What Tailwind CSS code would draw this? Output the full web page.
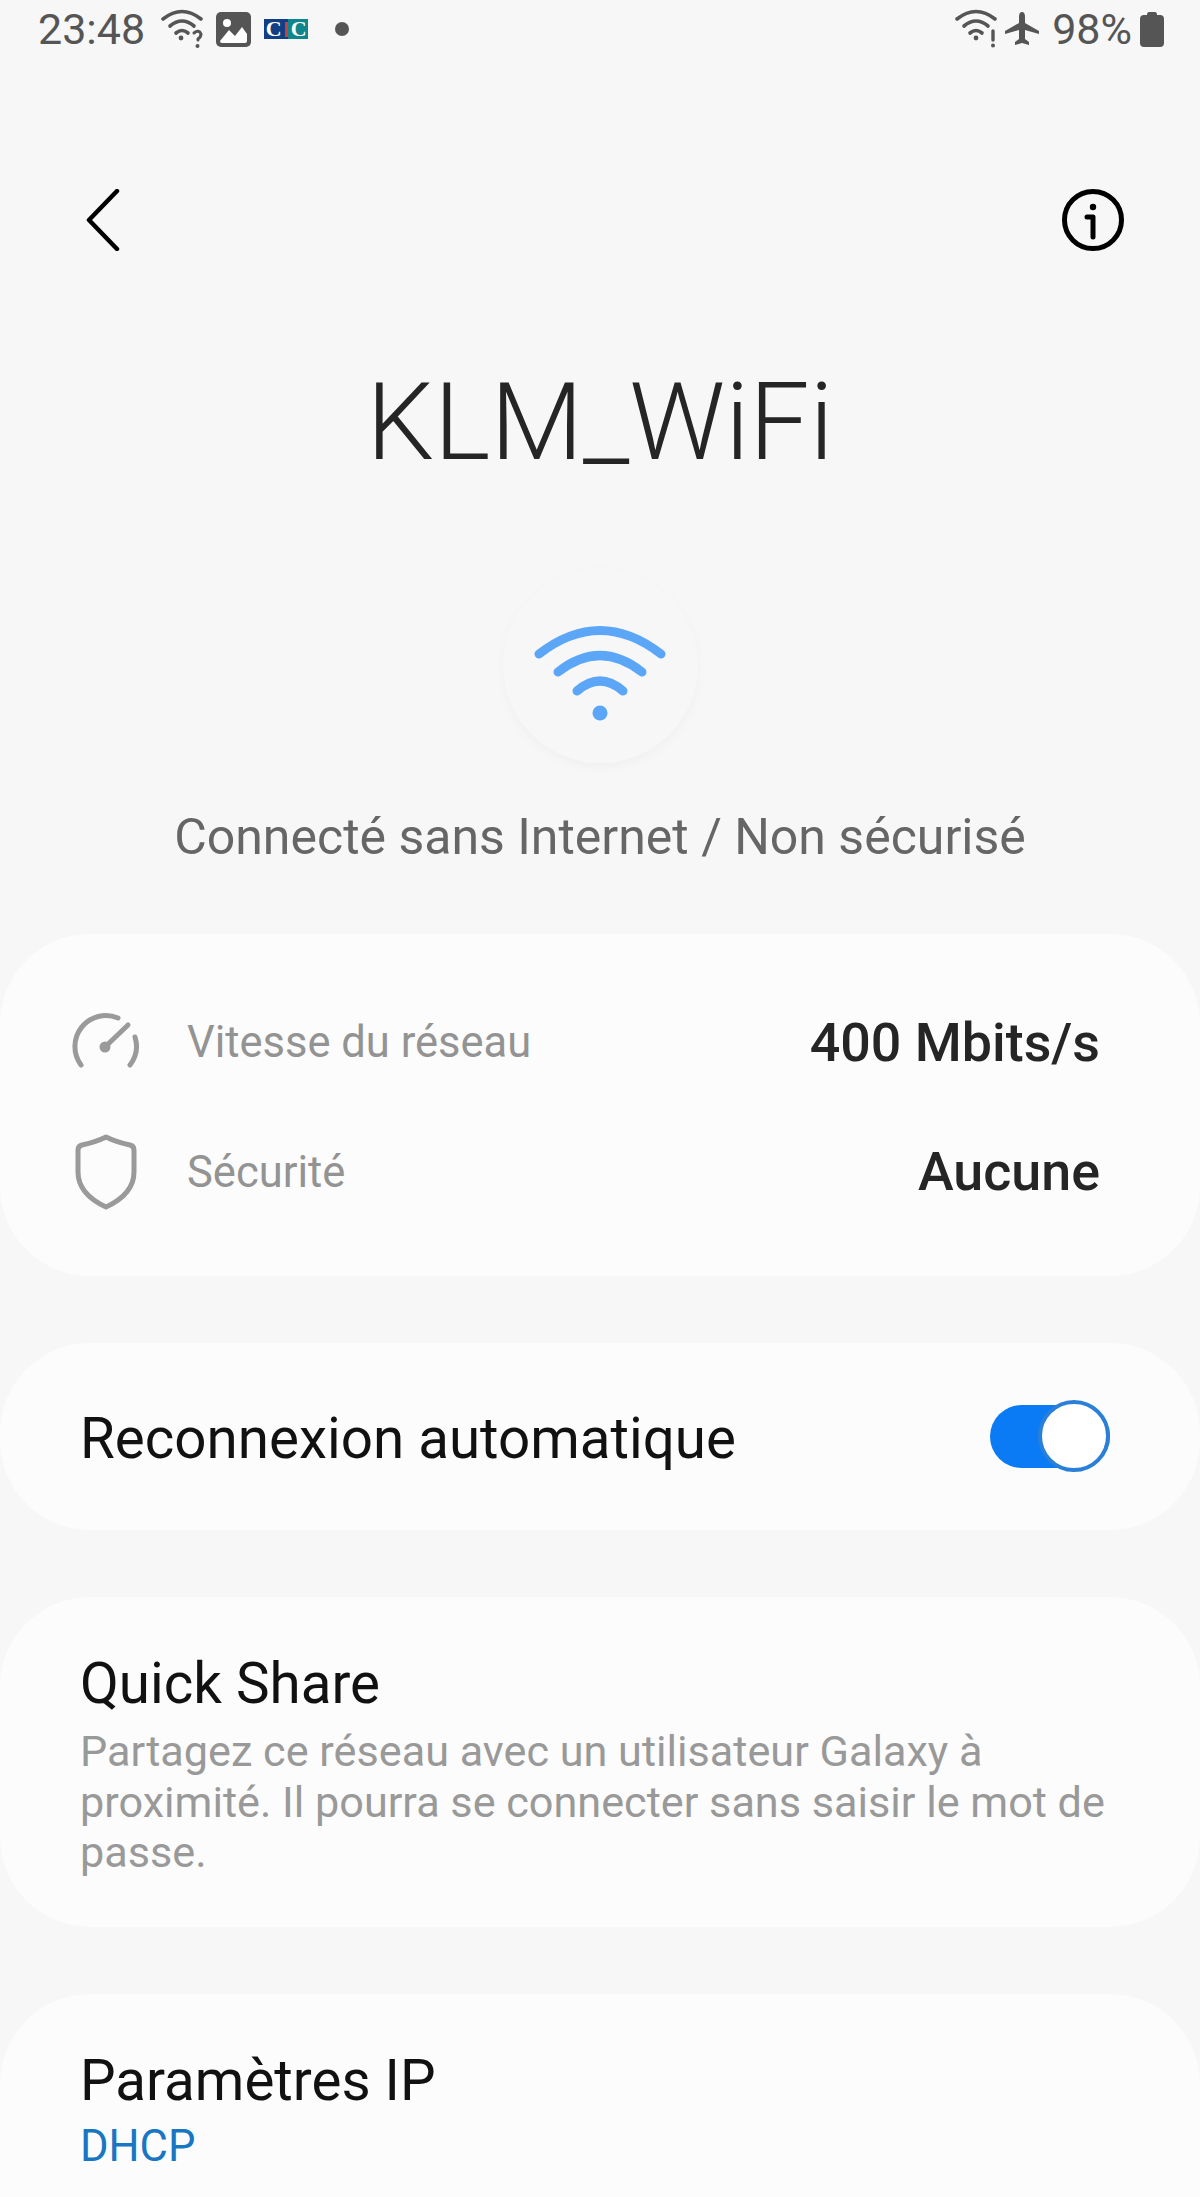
<!DOCTYPE html>
<html lang="fr">
<head>
    <meta charset="UTF-8">
    <title>KLM_WiFi</title>
    <script src="https://cdn.jsdelivr.net/npm/@tailwindcss/browser@4"></script>
</head>
<body class="bg-[#f7f7f7] font-['Roboto',sans-serif]">
<div class="w-[1200px] h-[2197px] overflow-hidden">

    <!-- Status bar -->
    <div class="h-[58px] flex items-center justify-between pl-[38px] pr-[36px] text-[#555] text-[43px] leading-none">
        <div class="flex items-center">
            <span>23:48</span>
            <svg class="ml-[16px]" width="44" height="40" viewBox="0 0 44 40" fill="none" stroke="#555" stroke-width="3.600" stroke-linecap="round">
                <path d="M2 10Q21 -5 40 10"/><path d="M9 17Q21 7 33 17"/><path d="M15 24Q21 19 27 24"/>
                <circle cx="20" cy="29" r="2.400" fill="#555" stroke="none"/>
                <path d="M33 24Q38 20 40 25Q40 28 37 30V31" stroke-width="3"/><circle cx="36.500" cy="37" r="2" fill="#555" stroke="none"/>
            </svg>
            <svg class="ml-[11px]" width="35" height="35" viewBox="0 0 35 35">
                <rect width="35" height="35" rx="5" fill="#555"/>
                <path d="M4 29L13 18L19 24L26 15L31 22V29Q31 31 29 31H6Q4 31 4 29Z" fill="#fff"/>
                <circle cx="11" cy="11" r="4" fill="#fff"/>
            </svg>
            <div class="ml-[13px] w-[44px] h-[20px] flex items-center justify-around bg-[linear-gradient(90deg,#123f84_55%,#11858c_55%)] text-white text-[22px] leading-none font-['Liberation_Serif',serif] font-bold">
                <span>C</span><span class="w-[3px] h-[15px] bg-[#c9413f]"></span><span>C</span>
            </div>
            <span class="ml-[27px] w-[14px] h-[14px] rounded-full bg-[#555]"></span>
        </div>
        <div class="flex items-center">
            <svg width="44" height="40" viewBox="0 0 44 40" fill="none" stroke="#555" stroke-width="3.600" stroke-linecap="round">
                <path d="M2 10Q21 -5 40 10"/><path d="M9 17Q21 7 33 17"/><path d="M15 24Q21 19 27 24"/>
                <circle cx="21" cy="29" r="2.400" fill="#555" stroke="none"/>
                <path d="M38 22V31" stroke-width="3.400"/><circle cx="38" cy="36.500" r="2" fill="#555" stroke="none"/>
            </svg>
            <svg class="ml-[6px]" width="34" height="34" viewBox="0 0 34 34">
                <path d="M17 0Q20 0 20 5V11L34 19V22L20 18V27L24 30V33L17 31L10 33V30L14 27V18L0 22V19L14 11V5Q14 0 17 0Z" fill="#555"/>
            </svg>
            <span class="ml-[13px]">98%</span>
            <svg class="ml-[8px]" width="24" height="35" viewBox="0 0 24 35">
                <path d="M7 3Q7 0 9 0H15Q17 0 17 3H20Q24 3 24 7V31Q24 35 20 35H4Q0 35 0 31V7Q0 3 4 3Z" fill="#555"/>
            </svg>
        </div>
    </div>

    <!-- Header icons -->
    <div class="mt-[132px] h-[60px] flex items-center justify-between pl-[86px] pr-[76px]">
        <svg width="34" height="62" viewBox="0 0 34 62" fill="none" stroke="#000" stroke-width="4.500" stroke-linecap="round" stroke-linejoin="round">
            <path d="M31 2L3 31L31 60"/>
        </svg>
        <svg width="62" height="62" viewBox="0 0 62 62" fill="none" stroke="#000" stroke-width="5" stroke-linecap="round" stroke-linejoin="round">
            <circle cx="31" cy="31" r="28.500"/>
            <path d="M25 28H31V48"/>
            <circle cx="31" cy="18" r="3.200" fill="#000" stroke="none"/>
        </svg>
    </div>

    <!-- Title -->
    <h1 class="mt-[123px] text-center text-[107px] leading-[100px] font-light text-[#252525]">KLM_WiFi</h1>

    <!-- Wifi badge -->
    <div class="mt-[95px] mx-auto w-[195px] h-[195px] pt-[14px] rounded-full bg-[#f7f7f7] shadow-[0_4px_12px_rgba(0,0,0,0.03)] flex items-center justify-center">
        <svg width="132" height="100" viewBox="0 0 132 100" fill="none" stroke="#5ca6f8" stroke-width="9" stroke-linecap="round">
            <path d="M5 31Q66 -16 127 31"/>
            <path d="M24 49Q66 16 108 49"/>
            <path d="M43 68Q66 48 89 68"/>
            <circle cx="66" cy="90" r="7.500" fill="#5ca6f8" stroke="none"/>
        </svg>
    </div>

    <p class="mt-[44px] text-center text-[50px] leading-[60px] text-[#666]">Connecté sans Internet / Non sécurisé</p>

    <!-- Network info card -->
    <section class="mt-[67px] h-[342px] bg-[#fcfcfc] rounded-[90px] pl-[70px] pr-[100px] pt-[65px]">
        <div class="flex items-center h-[88px]">
            <svg width="72" height="66" viewBox="0 0 72 66" fill="none" stroke="#9a9a9a" stroke-width="5" stroke-linecap="round">
                <path d="M11 55A31 31 0 0 1 48 8"/>
                <path d="M60 55A31 31 0 0 0 65 27"/>
                <path d="M35 37L58 15"/>
                <circle cx="35" cy="37" r="5.500" fill="#9a9a9a" stroke="none"/>
            </svg>
            <span class="ml-[45px] text-[43.500px] text-[#939393]">Vitesse du réseau</span>
            <span class="ml-auto text-[53.800px] font-medium text-[#252525]">400 Mbits/s</span>
        </div>
        <div class="flex items-center h-[88px] mt-[41px]">
            <svg width="72" height="76" viewBox="0 0 72 76" fill="none" stroke="#9a9a9a" stroke-width="5" stroke-linejoin="round">
                <path d="M36 3Q46 8 60 11Q64 12 64 16V38Q64 60 36 73Q8 60 8 38V16Q8 12 12 11Q26 8 36 3Z"/>
            </svg>
            <span class="ml-[45px] text-[43.500px] text-[#939393] translate-y-[1px]">Sécurité</span>
            <span class="ml-auto text-[53.800px] font-medium text-[#252525]">Aucune</span>
        </div>
    </section>

    <!-- Auto reconnect -->
    <section class="mt-[67px] h-[187px] bg-[#fcfcfc] rounded-[90px] pl-[80px] pr-[90px] flex items-center justify-between">
        <span class="text-[56.500px] text-[#111] mt-[6px]">Reconnexion automatique</span>
        <div class="relative w-[120px] h-[63px] rounded-full bg-[#0a7bf5]">
            <span class="absolute right-0 top-[-5px] w-[72px] h-[72px] rounded-full bg-white border-[4px] border-[#2a7fd8]"></span>
        </div>
    </section>

    <!-- Quick Share -->
    <section class="mt-[67px] h-[330px] bg-[#fcfcfc] rounded-[90px] px-[80px] pt-[57px]">
        <h2 class="text-[56.500px] leading-[60px] text-[#111]">Quick Share</h2>
        <p class="mt-[13px] text-[43.200px] leading-[50.500px] text-[#999]">Partagez ce réseau avec un utilisateur Galaxy à proximité. Il pourra se connecter sans saisir le mot de passe.</p>
    </section>

    <!-- IP settings -->
    <section class="mt-[67px] h-[300px] bg-[#fcfcfc] rounded-[90px] px-[80px] pt-[57px]">
        <h2 class="text-[56.500px] leading-[60px] text-[#111]">Paramètres IP</h2>
        <p class="mt-[11px] text-[43.500px] leading-[50px] text-[#1976c2]">DHCP</p>
    </section>

</div>
</body>
</html>
